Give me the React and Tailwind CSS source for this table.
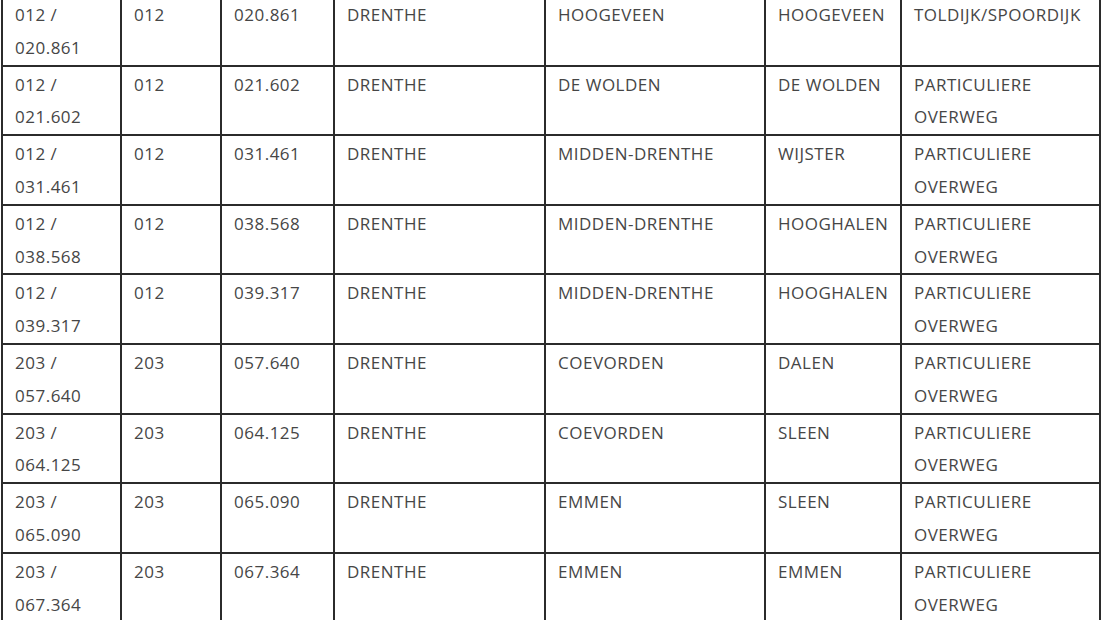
const ROWS = [
  ['012', '020.861', 'HOOGEVEEN', 'HOOGEVEEN', 'TOLDIJK/SPOORDIJK'],
  ['012', '021.602', 'DE WOLDEN', 'DE WOLDEN', 'PARTICULIERE OVERWEG'],
  ['012', '031.461', 'MIDDEN-DRENTHE', 'WIJSTER', 'PARTICULIERE OVERWEG'],
  ['012', '038.568', 'MIDDEN-DRENTHE', 'HOOGHALEN', 'PARTICULIERE OVERWEG'],
  ['012', '039.317', 'MIDDEN-DRENTHE', 'HOOGHALEN', 'PARTICULIERE OVERWEG'],
  ['203', '057.640', 'COEVORDEN', 'DALEN', 'PARTICULIERE OVERWEG'],
  ['203', '064.125', 'COEVORDEN', 'SLEEN', 'PARTICULIERE OVERWEG'],
  ['203', '065.090', 'EMMEN', 'SLEEN', 'PARTICULIERE OVERWEG'],
  ['203', '067.364', 'EMMEN', 'EMMEN', 'PARTICULIERE OVERWEG'],
];

const WIDTHS = ['w-[119px]', 'w-[100px]', 'w-[113px]', 'w-[211px]', 'w-[220px]', 'w-[136px]', 'w-[199px]'];

function Cell({ children }) {
  return (
    <td className="border-2 border-[#2b2b2b] px-3 pt-[2px] align-top h-[67px]">
      {children}
    </td>
  );
}

export default function App() {
  return (
    <div className="w-[1104px] h-[620px] overflow-hidden bg-white">
      <table
        className="table-fixed border-collapse w-[1100px] ml-[1px] -mt-[5px] text-[17px] tracking-[0.5px] leading-[32.8px] text-[#464646]"
        style={{ fontFamily: '"Open Sans", "Noto Sans", sans-serif' }}
      >
        <colgroup>
          {WIDTHS.map((w, i) => <col key={i} className={w} />)}
        </colgroup>
        <tbody>
          {ROWS.map(([line, km, gemeente, plaats, type]) => {
            const [t1, t2] = type.split(' ');
            return (
              <tr key={km}>
                <Cell>{line} /<br />{km}</Cell>
                <Cell>{line}</Cell>
                <Cell>{km}</Cell>
                <Cell>DRENTHE</Cell>
                <Cell>{gemeente}</Cell>
                <Cell>{plaats}</Cell>
                <Cell>{t1}{t2 && <><br />{t2}</>}</Cell>
              </tr>
            );
          })}
        </tbody>
      </table>
    </div>
  );
}
